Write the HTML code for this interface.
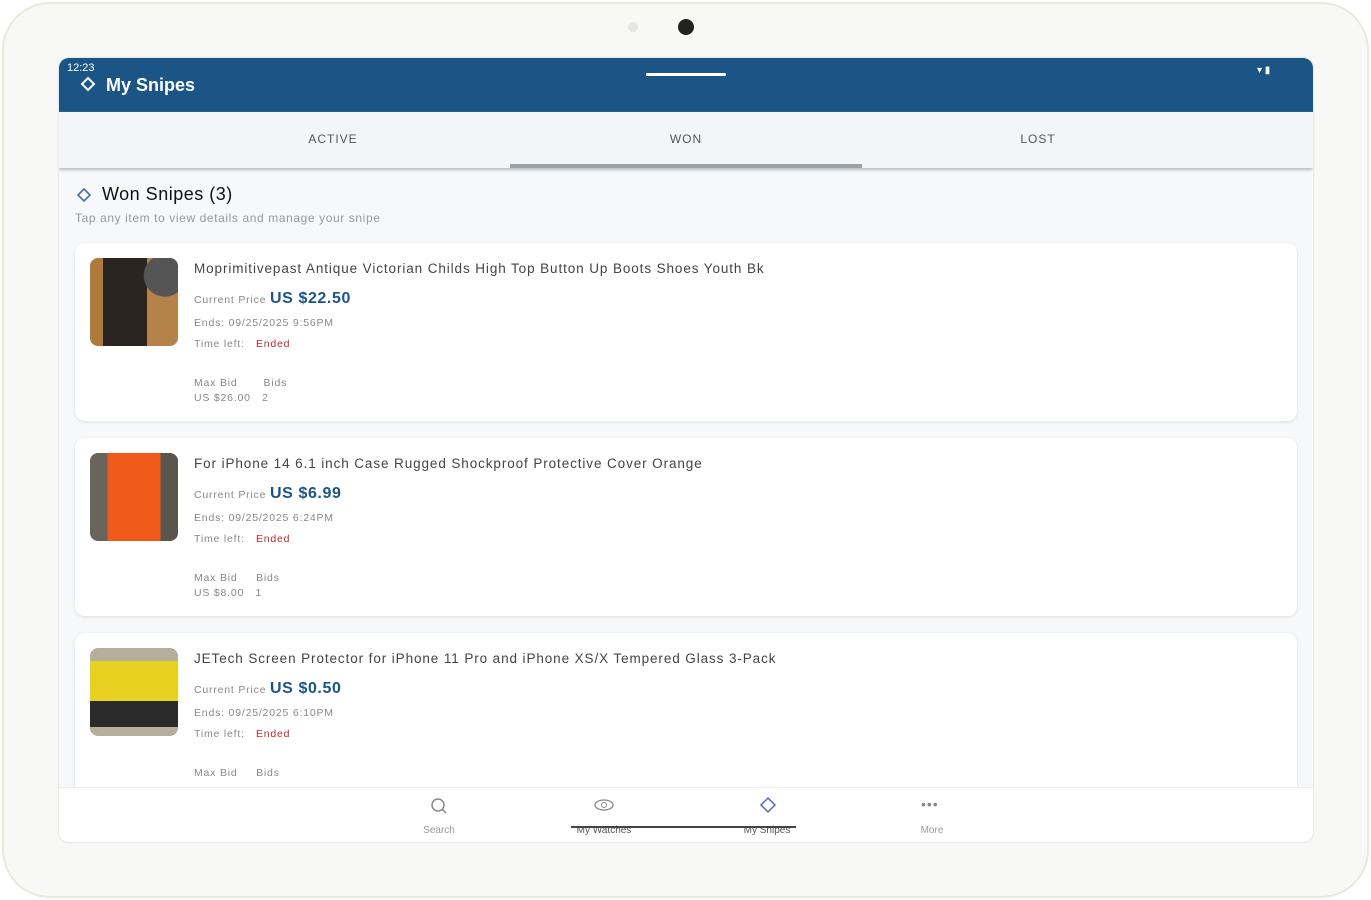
<!DOCTYPE html>
<html><head><meta charset="utf-8"><style>
*{margin:0;padding:0;box-sizing:border-box}
body{width:1371px;height:900px;background:#fff;font-family:"Liberation Sans",sans-serif;position:relative;overflow:hidden}
.frame{position:absolute;left:2px;top:2px;width:1367px;height:896px;border-radius:48px;background:#f8f8f7;border:2px solid #ece8dc}
.screen{position:absolute;left:59px;top:58px;width:1254px;height:784px;border-radius:10px;overflow:hidden;background:#f7f8fa;box-shadow:0 0 2px #ccc}
.hdr{position:absolute;left:0;top:0;width:100%;height:54px;background:#1a5585;color:#fff}
.tabs{position:absolute;left:0;top:54px;width:100%;height:56px;background:#f3f5f8;box-shadow:0 2px 3px #bbb}
.tab{position:absolute;top:20px;font-size:12px;letter-spacing:1px;color:#555;width:100px;text-align:center}
.card{position:absolute;left:16px;width:1222px;height:178px;background:#fff;border-radius:10px;box-shadow:0 1px 3px #ddd}
.img{position:absolute;left:15px;top:15px;width:88px;height:88px;border-radius:8px}
.t{position:absolute;left:119px;top:18px;font-size:13.5px;color:#444;letter-spacing:0.9px}
.l{position:absolute;left:119px;font-size:10.5px;color:#888;letter-spacing:0.8px}
.p{font-size:16px;color:#1a5585;font-weight:bold;letter-spacing:0.6px}
.e{color:#c0282d}
.nav{position:absolute;left:0;top:729px;width:100%;height:55px;background:#fff;border-top:1px solid #eee}
.ni{position:absolute;top:37px;font-size:10px;color:#999;width:80px;text-align:center}
</style></head><body>
<div class="frame"></div>
<div style="position:absolute;left:628px;top:22px;width:10px;height:10px;border-radius:50%;background:#e6e6e6"></div>
<div style="position:absolute;left:678px;top:19px;width:16px;height:16px;border-radius:50%;background:#222"></div>
<div class="screen">
 <div class="hdr">
  <div style="position:absolute;left:8px;top:4px;font-size:11px">12:23</div>
  <svg style="position:absolute;left:21px;top:18px" width="16" height="16"><path d="M8 2L14 8 8 14 2 8Z" fill="none" stroke="#fff" stroke-width="2"/></svg>
  <div style="position:absolute;left:47px;top:17px;font-size:18px;font-weight:bold">My Snipes</div>
  <div style="position:absolute;left:587px;top:15px;width:80px;height:3px;background:#fff;border-radius:2px"></div>
  <div style="position:absolute;left:1198px;top:7px;font-size:10px">▾ ▮</div>
 </div>
 <div class="tabs">
  <div class="tab" style="left:224px">ACTIVE</div>
  <div class="tab" style="left:577px">WON</div>
  <div class="tab" style="left:929px">LOST</div>
  <div style="position:absolute;left:451px;top:52px;width:352px;height:4px;background:#9aa0a8"></div>
 </div>
 <svg style="position:absolute;left:17px;top:129px" width="16" height="16"><path d="M8 2L14 8 8 14 2 8Z" fill="none" stroke="#4a6fb5" stroke-width="1.6"/></svg>
 <div style="position:absolute;left:43px;top:126px;font-size:18px;color:#111;letter-spacing:0.5px">Won Snipes (3)</div>
 <div style="position:absolute;left:16px;top:153px;font-size:12px;color:#999;letter-spacing:0.6px">Tap any item to view details and manage your snipe</div>

 <div class="card" style="top:185px">
  <div class="img" style="background:radial-gradient(circle at 85% 20%,#555 0 20%,transparent 21%),linear-gradient(90deg,#b07a3a 0 15%,#2a2520 15% 65%,#b5834a 65%)"></div>
  <div class="t">Moprimitivepast Antique Victorian Childs High Top Button Up Boots Shoes Youth Bk</div>
  <div class="l" style="top:47px">Current Price <span class="p">US $22.50</span></div>
  <div class="l" style="top:74px">Ends: 09/25/2025 9:56PM</div>
  <div class="l" style="top:95px">Time left: &nbsp; <span class="e">Ended</span></div>
  <div class="l" style="top:133px;line-height:15px">Max Bid &nbsp;&nbsp;&nbsp;&nbsp;&nbsp; Bids<br>US $26.00 &nbsp; 2</div>
 </div>
 <div class="card" style="top:380px">
  <div class="img" style="background:linear-gradient(90deg,#6a655c 0 20%,#f05a1a 20% 80%,#5a564f 80%)"></div>
  <div class="t">For iPhone 14 6.1 inch Case Rugged Shockproof Protective Cover Orange</div>
  <div class="l" style="top:47px">Current Price <span class="p">US $6.99</span></div>
  <div class="l" style="top:74px">Ends: 09/25/2025 6:24PM</div>
  <div class="l" style="top:95px">Time left: &nbsp; <span class="e">Ended</span></div>
  <div class="l" style="top:133px;line-height:15px">Max Bid &nbsp;&nbsp;&nbsp; Bids<br>US $8.00 &nbsp; 1</div>
 </div>
 <div class="card" style="top:575px">
  <div class="img" style="background:linear-gradient(180deg,#b5ae9c 0 15%,#e8d020 15% 60%,#2a2a2a 60% 90%,#b5ae9c 90%)"></div>
  <div class="t">JETech Screen Protector for iPhone 11 Pro and iPhone XS/X Tempered Glass 3-Pack</div>
  <div class="l" style="top:47px">Current Price <span class="p">US $0.50</span></div>
  <div class="l" style="top:74px">Ends: 09/25/2025 6:10PM</div>
  <div class="l" style="top:95px">Time left: &nbsp; <span class="e">Ended</span></div>
  <div class="l" style="top:133px;line-height:15px">Max Bid &nbsp;&nbsp;&nbsp; Bids</div>
 </div>
 <div class="nav">
  <svg style="position:absolute;left:370px;top:8px" width="20" height="20"><circle cx="9" cy="9" r="6" fill="none" stroke="#888" stroke-width="1.5"/><path d="M13 13L17 17" stroke="#888" stroke-width="1.5"/></svg>
  <div class="ni" style="left:340px">Search</div>
  <svg style="position:absolute;left:534px;top:10px" width="22" height="14"><ellipse cx="11" cy="7" rx="9" ry="5" fill="none" stroke="#888" stroke-width="1.3"/><circle cx="11" cy="7" r="2.5" fill="none" stroke="#888"/></svg>
  <div class="ni" style="left:505px;color:#555">My Watches</div>
  <svg style="position:absolute;left:700px;top:8px" width="18" height="18"><path d="M9 2L16 9 9 16 2 9Z" fill="none" stroke="#4a6fb5" stroke-width="1.5"/></svg>
  <div class="ni" style="left:668px;color:#555">My Snipes</div>
  <div style="position:absolute;left:512px;top:38px;width:225px;height:2px;background:#444"></div>
  <div style="position:absolute;left:862px;top:8px;font-size:14px;color:#888;letter-spacing:1px">•••</div>
  <div class="ni" style="left:833px">More</div>
 </div>
</div>
</body></html>
